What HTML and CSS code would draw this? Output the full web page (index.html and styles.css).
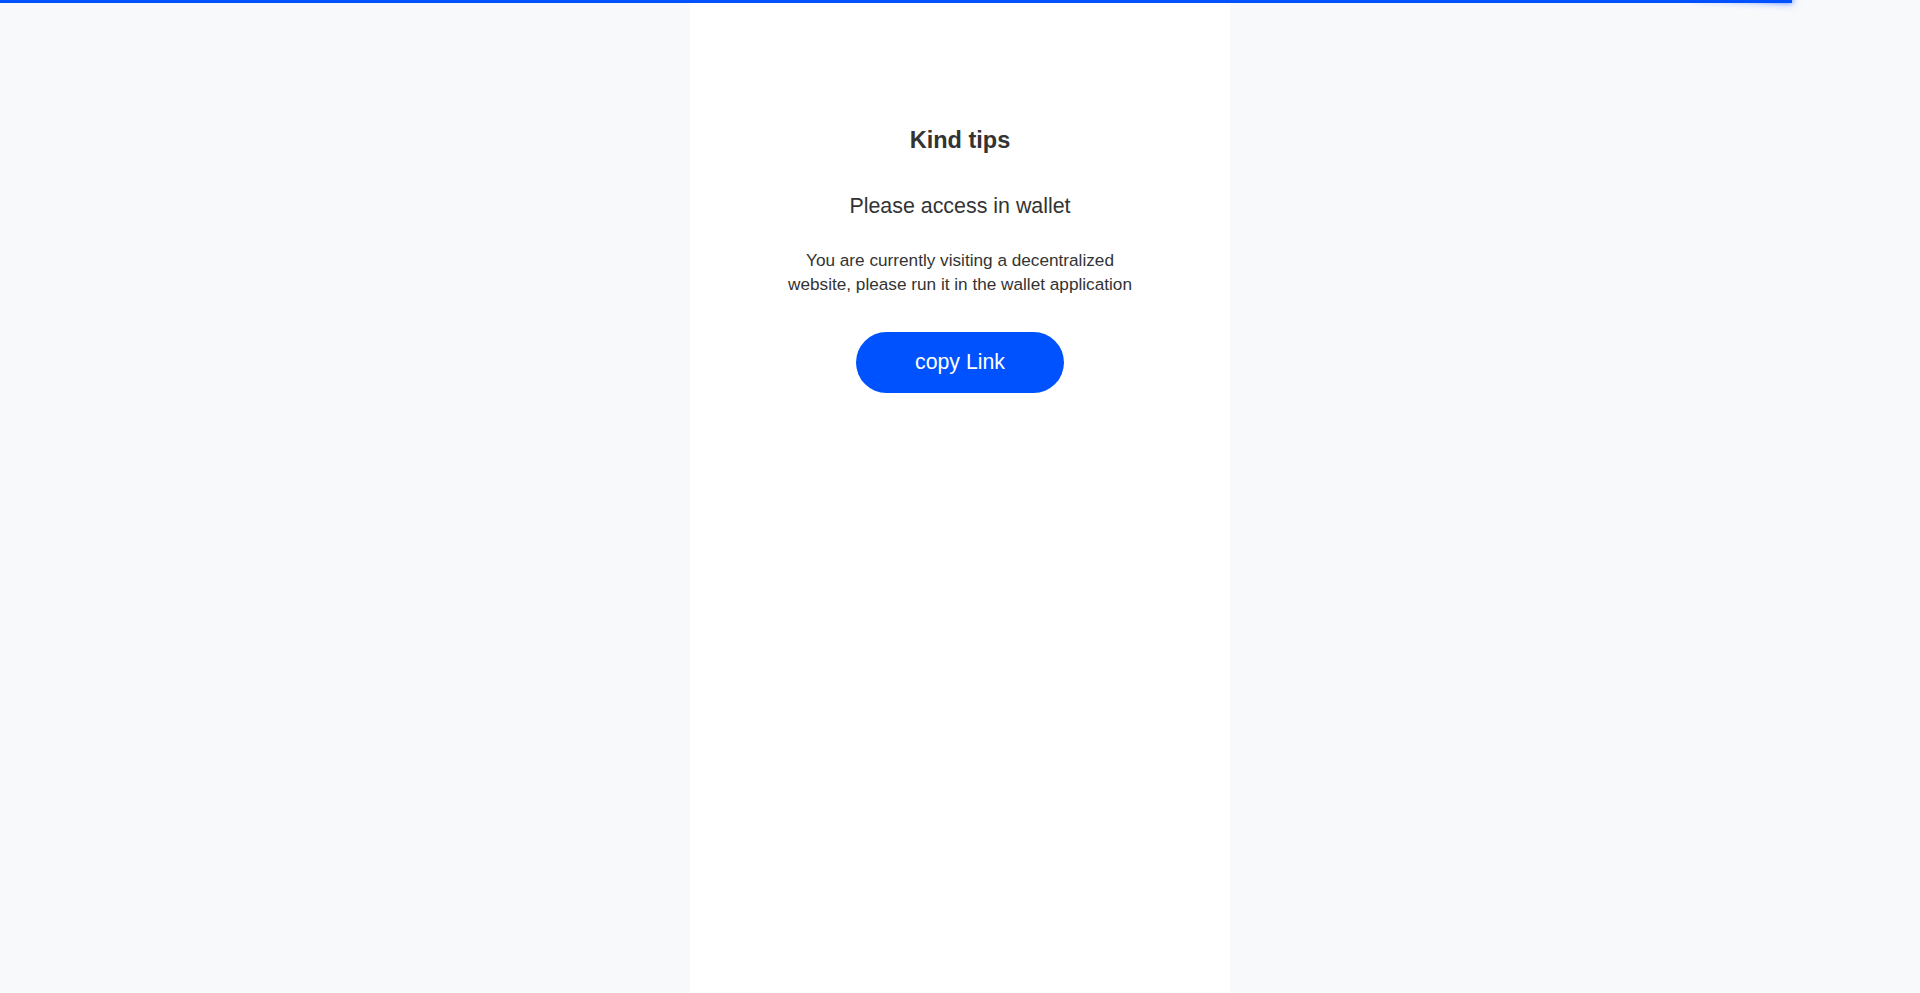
FILE: index.html
```html
<!DOCTYPE html>
<html lang="en">
<head>
<meta charset="utf-8">
<title>Kind tips</title>
<link rel="stylesheet" href="styles.css">
</head>
<body>
<div class="progress"><div class="progress-bar" style="width: 93.33%"><div class="progress-peg"></div></div></div>
<main class="page">
  <h1 class="title">Kind tips</h1>
  <p class="subtitle">Please access in wallet</p>
  <p class="desc">You are currently visiting a decentralized website, please run it in the wallet application</p>
  <button class="copy-btn" type="button">copy Link</button>
</main>
</body>
</html>
```
FILE: styles.css
```css
* { box-sizing: border-box; }
html, body { height: 100%; }
body {
  margin: 0;
  background: #f8f9fb;
  font-family: "Liberation Sans", Arial, sans-serif;
  color: #333333;
}
.progress {
  position: fixed;
  top: 0;
  left: 0;
  right: 0;
  height: 3px;
  z-index: 10;
  pointer-events: none;
}
.progress-bar {
  height: 3px;
  background: #0052ff;
  position: relative;
}
.progress-peg {
  position: absolute;
  right: 0;
  top: 0;
  width: 100px;
  height: 100%;
  box-shadow: 0 0 10px #0052ff, 0 0 5px #0052ff;
  transform: rotate(3deg) translate(0, -4px);
}
.page {
  width: 540px;
  min-height: 100%;
  margin: 0 auto;
  background: #ffffff;
  padding-top: 126px;
  display: flex;
  flex-direction: column;
  align-items: center;
  text-align: center;
}
.title {
  margin: 0;
  font-size: 23.5px;
  line-height: 28px;
  font-weight: bold;
  color: #333333;
}
.subtitle {
  margin: 37px 0 0;
  font-size: 21.4px;
  line-height: 30px;
  color: #333333;
}
.desc {
  margin: 27px 0 0;
  max-width: 360px;
  font-size: 17.2px;
  line-height: 24px;
  color: #333333;
}
.copy-btn {
  margin-top: 36px;
  width: 208px;
  height: 61px;
  border: none;
  border-radius: 31px;
  background: #0052ff;
  color: #ffffff;
  font-family: "Liberation Sans", Arial, sans-serif;
  font-size: 21.3px;
  padding: 0;
  cursor: pointer;
}
```
